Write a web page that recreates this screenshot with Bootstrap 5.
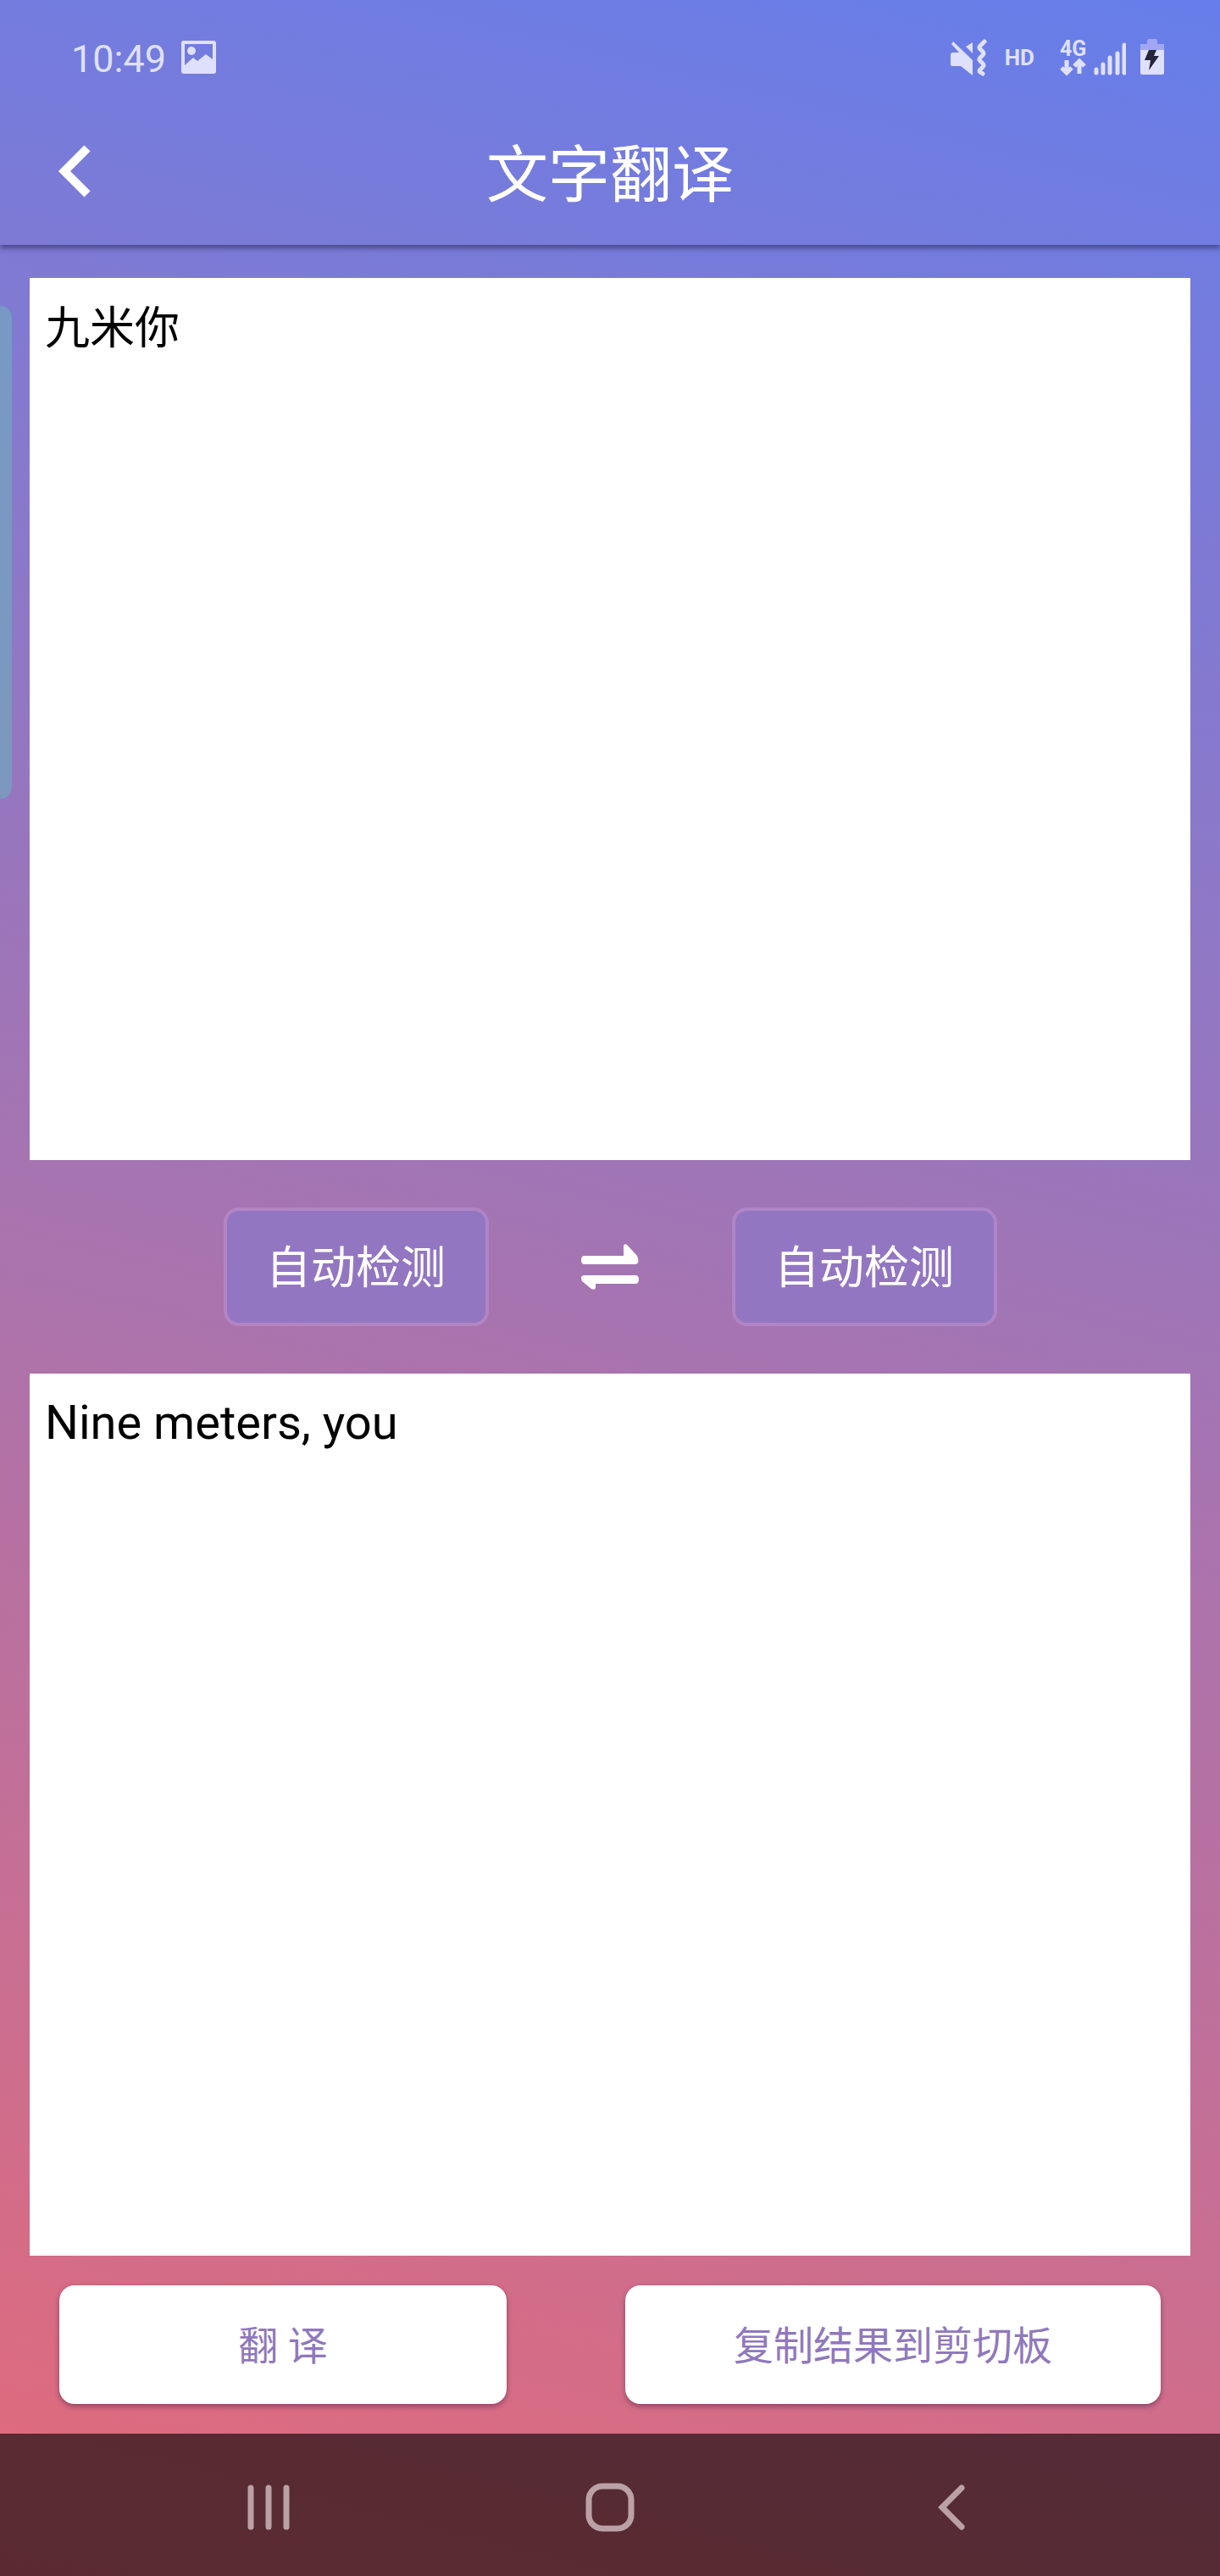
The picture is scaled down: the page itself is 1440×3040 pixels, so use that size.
<!DOCTYPE html>
<html lang="zh-CN">
<head>
<meta charset="utf-8">
<meta name="viewport" content="width=device-width, initial-scale=1">
<title>文字翻译</title>
<link href="https://cdn.jsdelivr.net/npm/bootstrap@5.3.0/dist/css/bootstrap.min.css" rel="stylesheet">
<style>
  body {
    font-family: Roboto, "Noto Sans CJK SC", sans-serif;
    background: linear-gradient(194deg, #667eea, #e46a79) no-repeat #e46a79;
  }
  .status-bar { height: 136px; padding: 0 65px 0 84px; color: #dfe0fb; }
  .clock { font-size: 45px; line-height: 56px; padding-top: 3px; }
  .hd-tag { font-size: 26px; line-height: 32px; margin: 0 20px 0 18px; }
  .title-bar { height: 153px; padding: 0 64px 22px; box-shadow: 0 4px 6px rgba(40, 40, 90, .6); clip-path: inset(0 0 -14px 0); }
  .title-bar h1 { font-size: 73px; line-height: 96px; padding-top: 10px; }
  .icon-btn { background: none; border: 0; padding: 0; line-height: 0; }
  .page-body { padding: 39px 35px 35px; }
  textarea.text-pane {
    flex: 1 1 0; min-height: 200px; border: 0; border-radius: 0; resize: none;
    background: #fff; color: #000; padding: 20px 18px; font-size: 56px; line-height: 76px;
  }
  textarea.text-pane.source { font-size: 53px; line-height: 80px; }
  .lang-row { padding: 56px 0; gap: 109px; }
  .lang-btn {
    width: 313px; height: 140px; border: 4px solid rgba(190, 150, 215, .5); border-radius: 18px;
    background: #9376c1; background-clip: padding-box; color: #fff;
    font-size: 53px; line-height: 64px; padding: 4px 0 0;
  }
  .action-row { padding: 35px 35px 0; gap: 140px; }
  .action-btn {
    height: 140px; border: 0; border-radius: 18px; background: #fff; color: #9078bd;
    font-size: 47px; line-height: 60px; padding: 4px 0 0; box-shadow: 0 3px 6px rgba(60, 20, 60, .45);
  }
  .act-go { flex: 528 1 0; }
  .act-copy { flex: 632 1 0; }
  .system-nav { height: 168px; padding-top: 6px; background: rgba(0, 0, 0, .6); }
  .nav-slot { width: 28%; }
  .edge-handle {
    top: 361px; left: 0; width: 14px; height: 582px;
    background: rgba(115, 165, 190, .72); border-radius: 0 14px 14px 0;
  }
</style>
<script src="https://cdn.jsdelivr.net/npm/bootstrap@5.3.0/dist/js/bootstrap.bundle.min.js"></script>
</head>
<body class="min-vh-100 d-flex flex-column position-relative">
  <div class="status-bar d-flex align-items-center">
    <span class="clock">10:49</span>
    <svg class="ms-3" width="48" height="42" viewBox="2 0 48 42" aria-hidden="true">
      <path fill="currentColor" fill-rule="evenodd" d="M6 1h36a3 3 0 0 1 3 3v33a3 3 0 0 1-3 3H7a3 3 0 0 1-3-3V4a3 3 0 0 1 2-3zM8 5v25l10-9 5 4 10-8 8 6V5z"/>
      <circle cx="16" cy="13" r="5" fill="currentColor"/>
    </svg>
    <div class="d-flex align-items-center ms-auto">
      <svg width="48" height="44" viewBox="0 0 48 44" fill="currentColor" aria-hidden="true">
        <path d="M5 3l23 22v18L14 32H4q-2 0-2-2V19q0-3 3-3h7L3 6zM28 4v13l-8-8z"/>
        <path d="M42 3l-5 5q-2 2 0 4l3 3q2 2 0 4l-3 3q-2 2 0 4l3 3q2 2 0 4l-3 3q-2 2 0 3l3 2" fill="none" stroke="currentColor" stroke-width="5" stroke-linejoin="round" stroke-linecap="round"/>
      </svg>
      <span class="hd-tag fw-bold">HD</span>
      <svg width="88" height="58" viewBox="-6 -6 88 58" aria-hidden="true">
        <text x="4" y="21" font-size="25" font-weight="700" fill="currentColor">4G</text>
        <path d="M12 26v14M6 35l6 6 6-6M27 42V28M21 33l6-6 6 6" fill="none" stroke="currentColor" stroke-width="5"/>
        <path d="M47 37v4M55 31v10M63 23v18M72 18v23M80 8v33" stroke="currentColor" stroke-width="5" stroke-linecap="round"/>
      </svg>
      <svg class="ms-3" width="30" height="46" viewBox="0 0 30 46" aria-hidden="true">
        <path d="M1 7h8V3q0-2 2-2h8q2 0 2 2v4h8v7H1z" fill="#a2a7f4"/>
        <path d="M1 14h28v27q0 2-2 2H3q-2 0-2-2z" fill="#dfe0fb"/>
        <path d="M11 14h9l-3 7h6L11 38l2-12H6z" fill="#25253c"/>
      </svg>
    </div>
  </div>
  <header class="title-bar d-flex align-items-center justify-content-between text-white">
    <button class="icon-btn text-white" type="button" aria-label="返回">
      <svg width="48" height="64" viewBox="0 0 48 64"><path d="M39 5L12 32l27 27" fill="none" stroke="currentColor" stroke-width="10"/></svg>
    </button>
    <h1 class="m-0 fw-normal">文字翻译</h1>
    <svg width="48" height="64" aria-hidden="true"></svg>
  </header>
  <main class="page-body flex-grow-1 d-flex flex-column">
    <textarea class="text-pane source form-control shadow-none" aria-label="原文">九米你</textarea>
    <div class="lang-row d-flex align-items-center justify-content-center">
      <button class="lang-btn" type="button">自动检测</button>
      <button class="icon-btn text-white" type="button" aria-label="交换语言">
        <svg width="69" height="56" viewBox="1 0 69 56" fill="currentColor"><path d="M5 15h46V4q0-4 4-2l12 13q4 10-3 10H5q-4 0-4-5t4-5zM65 38q4 0 4 5t-4 5H18v4q0 4-5 2L2 45q-3-7 3-7z"/></svg>
      </button>
      <button class="lang-btn" type="button">自动检测</button>
    </div>
    <textarea class="text-pane form-control shadow-none" aria-label="译文" readonly>Nine meters, you</textarea>
    <div class="action-row d-flex">
      <button class="action-btn act-go" type="button">翻 译</button>
      <button class="action-btn act-copy" type="button">复制结果到剪切板</button>
    </div>
  </main>
  <nav class="system-nav d-flex align-items-center justify-content-center" aria-label="系统导航">
    <div class="nav-slot text-center">
      <button class="icon-btn" type="button" aria-label="最近任务">
        <svg width="60" height="60" viewBox="0 0 60 60"><path d="M9 7v46M30 7v46M51 7v46" stroke="#baa1a5" stroke-width="7" stroke-linecap="round"/></svg>
      </button>
    </div>
    <div class="nav-slot text-center">
      <button class="icon-btn" type="button" aria-label="主屏幕">
        <svg width="60" height="60" viewBox="0 0 60 60"><rect x="5" y="5" width="50" height="50" rx="16" fill="none" stroke="#baa1a5" stroke-width="7"/></svg>
      </button>
    </div>
    <div class="nav-slot text-center">
      <button class="icon-btn" type="button" aria-label="返回上一页">
        <svg width="60" height="60" viewBox="0 0 60 60"><path d="M42 7L19 30l23 23" fill="none" stroke="#baa1a5" stroke-width="7" stroke-linecap="round"/></svg>
      </button>
    </div>
  </nav>
  <div class="edge-handle position-absolute"></div>
</body>
</html>
